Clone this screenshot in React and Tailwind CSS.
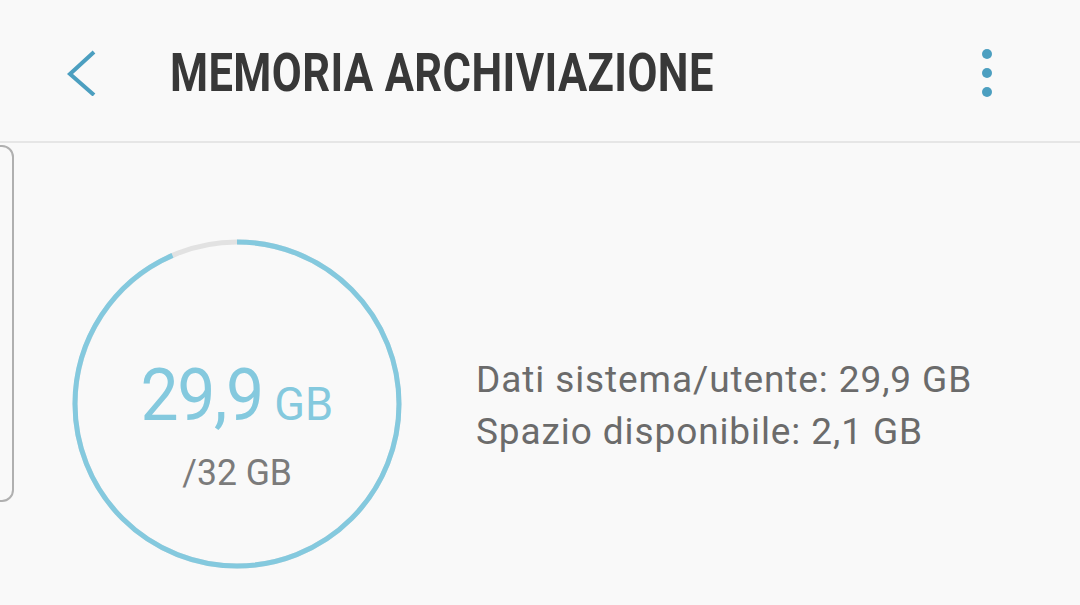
import React from 'react';

// Storage screen: header bar + usage ring with legend
const used = 29.9;
const total = 32;

function UsageRing() {
  const r = 162;
  const c = 2 * Math.PI * r;
  const frac = used / total;
  return (
    <div className="relative w-[334px] h-[334px] shrink-0">
      <svg width="334" height="334" viewBox="0 0 334 334" className="absolute inset-0">
        <circle cx="167" cy="167" r={r} fill="none" stroke="#e2e2e2" strokeWidth="5" />
        <circle
          cx="167"
          cy="167"
          r={r}
          fill="none"
          stroke="#84c9de"
          strokeWidth="5"
          strokeDasharray={`${c * frac} ${c}`}
          transform="rotate(-90 167 167)"
        />
      </svg>
      <div className="absolute inset-0 flex flex-col items-center justify-center">
        <div className="flex items-baseline text-[#84c9de] mt-[42px] -ml-[4px]">
          <span className="text-[73px] leading-none tracking-[-1.5px] inline-block scale-x-[0.93]">29,9</span>
          <span className="text-[47px] leading-none ml-[6px] inline-block scale-x-[0.96]">GB</span>
        </div>
        <div className="text-[37px] leading-none text-[#7b7b7b] mt-[22px] inline-block scale-x-[0.96]">/32 GB</div>
      </div>
    </div>
  );
}

export default function App() {
  return (
    <div className="w-[1080px] h-[605px] overflow-hidden bg-[#f9f9f9] flex flex-col" style={{ fontFamily: 'Roboto, "Noto Sans", sans-serif' }}>
      {/* Header */}
      <div className="h-[143px] shrink-0 flex items-center border-b-2 border-[#e6e6e6]">
        <div className="w-[170px] flex items-center pl-[66px] mt-[2px]">
          <svg width="32" height="48" viewBox="0 0 32 48">
            <path d="M28 4 L4 26 L28 47" fill="none" stroke="#4c9fc0" strokeWidth="4" />
          </svg>
        </div>
        <div className="flex-1 mt-[6px]">
          <span className="inline-block origin-left scale-x-[0.82] text-[53px] font-bold text-[#383838] tracking-[0.5px] leading-none">
            MEMORIA ARCHIVIAZIONE
          </span>
        </div>
        <div className="w-[186px] flex flex-col items-center gap-[9px] mt-[4px]">
          <span className="w-[10px] h-[10px] rounded-full bg-[#4c9fc0]" />
          <span className="w-[10px] h-[10px] rounded-full bg-[#4c9fc0]" />
          <span className="w-[10px] h-[10px] rounded-full bg-[#4c9fc0]" />
        </div>
      </div>

      {/* Body */}
      <div className="flex-1 flex items-start">
        {/* previous card peeking from the left */}
        <div className="w-[200px] -ml-[186px] h-[357px] mt-[2px] shrink-0 rounded-[12px] border-2 border-[#b0b0b0]" />
        <div className="ml-[56px] mt-[94px]">
          <UsageRing />
        </div>
        <div className="ml-[72px] mt-[211px] text-[37px] tracking-[0.9px] leading-[52px] text-[#6b6b6b]">
          <div>Dati sistema/utente: 29,9 GB</div>
          <div>Spazio disponibile: 2,1 GB</div>
        </div>
      </div>
    </div>
  );
}
